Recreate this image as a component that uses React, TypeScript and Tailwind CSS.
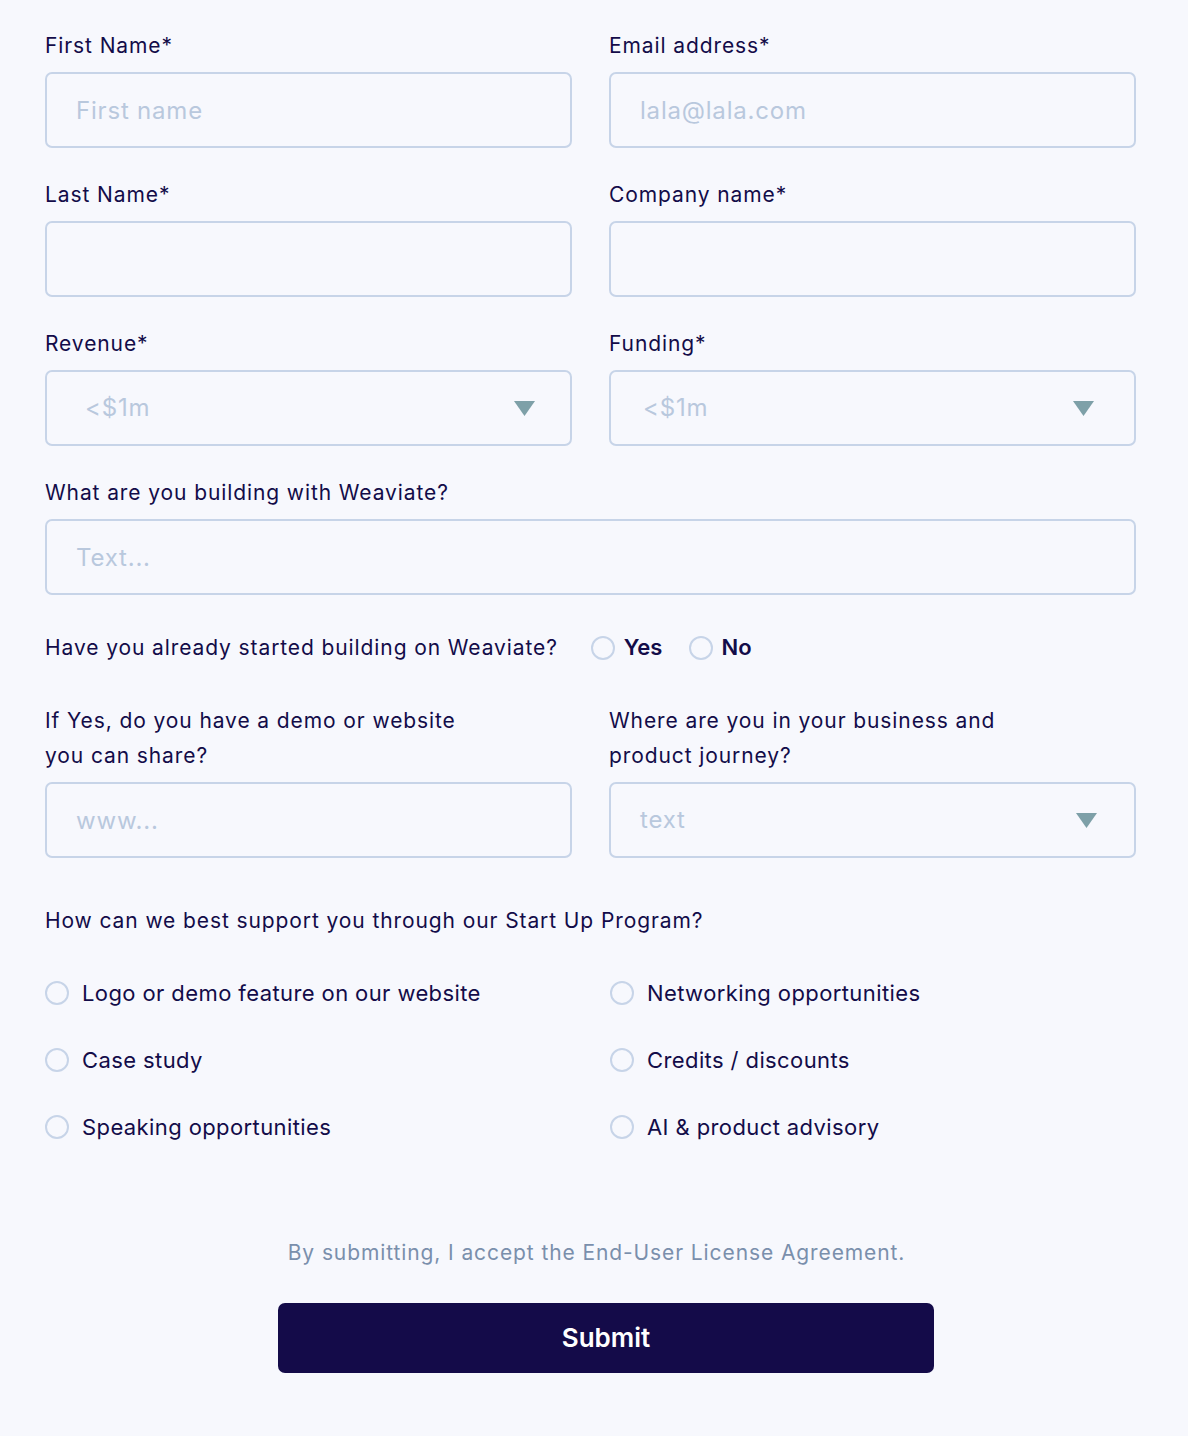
import React from "react";

const labelCls = "text-[21px] tracking-[0.9px] leading-[35px] text-[#130c49]";
const inputCls =
  "h-[76px] w-full rounded-[7px] border-2 border-[#c7d4e8] bg-[#f7f8fd] px-[29px] text-[24px] tracking-[0.8px] text-[#130c49] placeholder:text-[#b9c8dd] outline-none";

function Field({ label, placeholder }: { label: string; placeholder?: string }) {
  return (
    <div className="flex flex-col">
      <label className={`${labelCls} mb-[9px]`}>{label}</label>
      <input className={inputCls} placeholder={placeholder} />
    </div>
  );
}

function Triangle() {
  return (
    <svg width="21" height="15" viewBox="0 0 21 15">
      <path d="M0 0 H21 L10.5 15 Z" fill="#7ea0a8" />
    </svg>
  );
}

function Select({ label, value, pad, tri }: { label: string; value: string; pad: string; tri: string }) {
  return (
    <div className="flex flex-col">
      <label className={`${labelCls} mb-[9px]`}>{label}</label>
      <div className={`flex h-[76px] w-full items-center justify-between rounded-[7px] border-2 border-[#c7d4e8] ${pad} ${tri}`}>
        <span className="text-[24px] tracking-[0.8px] text-[#b9c8dd]">{value}</span>
        <Triangle />
      </div>
    </div>
  );
}

function Radio() {
  return <span className="inline-block h-[24px] w-[24px] shrink-0 rounded-full border-2 border-[#c7d4e8] bg-[#f7f8fd]" />;
}

function Option({ text }: { text: string }) {
  return (
    <div className="flex h-[24px] items-center gap-[13px]">
      <Radio />
      <span className="text-[22px] tracking-[0.4px] text-[#130c49]">{text}</span>
    </div>
  );
}

export default function App() {
  return (
    <div
      className="min-h-[1436px] w-full bg-[#f7f8fd] pl-[45px] pt-[28px]"
      style={{ fontFamily: "Inter, 'Noto Sans', sans-serif" }}
    >
      <div className="w-[1091px]">
        <div className="grid grid-cols-2 gap-x-[37px] gap-y-[29px]">
          <Field label="First Name*" placeholder="First name" />
          <Field label="Email address*" placeholder="lala@lala.com" />
          <Field label="Last Name*" />
          <Field label="Company name*" />
          <Select label="Revenue*" value="<$1m" pad="pl-[38px]" tri="pr-[35px]" />
          <Select label="Funding*" value="<$1m" pad="pl-[32px]" tri="pr-[40px]" />
        </div>
        <div className="mt-[29px]">
          <Field label="What are you building with Weaviate?" placeholder="Text..." />
        </div>
        <div className="mt-[35px] flex items-center">
          <span className={labelCls}>Have you already started building on Weaviate?</span>
          <div className="ml-[33px] flex items-center gap-[9px]">
            <Radio />
            <span className="text-[22px] font-semibold text-[#130c49]">Yes</span>
          </div>
          <div className="ml-[27px] flex items-center gap-[8px]">
            <Radio />
            <span className="text-[22px] font-semibold text-[#130c49]">No</span>
          </div>
        </div>
        <div className="mt-[38px] grid grid-cols-2 gap-x-[37px]">
          <div className="flex flex-col">
            <label className={`${labelCls} mb-[9px]`}>
              If Yes, do you have a demo or website
              <br />
              you can share?
            </label>
            <input className={inputCls} placeholder="www..." />
          </div>
          <div className="flex flex-col">
            <label className={`${labelCls} mb-[9px]`}>
              Where are you in your business and
              <br />
              product journey?
            </label>
            <div className="flex h-[76px] w-full items-center justify-between rounded-[7px] border-2 border-[#c7d4e8] pl-[29px] pr-[37px]">
              <span className="text-[24px] tracking-[0.8px] text-[#b9c8dd]">text</span>
              <Triangle />
            </div>
          </div>
        </div>
        <div className={`${labelCls} mt-[45px]`}>How can we best support you through our Start Up Program?</div>
        <div className="mt-[43px] grid grid-cols-2 gap-x-[39px] gap-y-[43px]">
          <Option text="Logo or demo feature on our website" />
          <Option text="Networking opportunities" />
          <Option text="Case study" />
          <Option text="Credits / discounts" />
          <Option text="Speaking opportunities" />
          <Option text="AI & product advisory" />
        </div>
        <div className="mt-[98px] pl-[12px] text-center text-[21px] tracking-[0.9px] text-[#7a8fac]">
          By submitting, I accept the End-User License Agreement.
        </div>
        <button className="ml-[233px] mt-[34px] flex h-[70px] w-[656px] items-center justify-center rounded-[7px] bg-[#140b49] text-[26px] font-semibold text-white">
          Submit
        </button>
      </div>
    </div>
  );
}
